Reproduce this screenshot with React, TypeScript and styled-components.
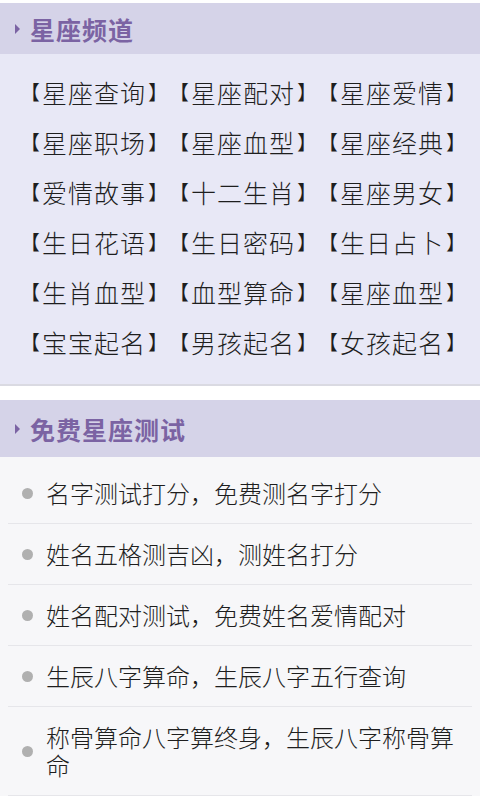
import React from 'react';
import styled, { createGlobalStyle } from 'styled-components';

const channels = [
  '星座查询', '星座配对', '星座爱情',
  '星座职场', '星座血型', '星座经典',
  '爱情故事', '十二生肖', '星座男女',
  '生日花语', '生日密码', '生日占卜',
  '生肖血型', '血型算命', '星座血型',
  '宝宝起名', '男孩起名', '女孩起名',
];

const tests = [
  '名字测试打分，免费测名字打分',
  '姓名五格测吉凶，测姓名打分',
  '姓名配对测试，免费姓名爱情配对',
  '生辰八字算命，生辰八字五行查询',
  '称骨算命八字算终身，生辰八字称骨算命',
];

const App = () => {
  return (
    <>
      <GlobalStyle />
      <Page>
        <Section>
          <Header $height={51}>
            <Arrow />
            <Title>星座频道</Title>
          </Header>
          <ChannelGrid>
            {channels.map((name, i) => (
              <ChannelLink key={i}>
                <Bracket>【</Bracket>
                <Name>{name}</Name>
                <Bracket>】</Bracket>
              </ChannelLink>
            ))}
          </ChannelGrid>
        </Section>
        <Section>
          <Header $height={57}>
            <Arrow />
            <Title>免费星座测试</Title>
          </Header>
          <TestList>
            {tests.map((text, i) => (
              <TestItem key={i}>
                <Bullet />
                <TestText>{text}</TestText>
              </TestItem>
            ))}
          </TestList>
        </Section>
      </Page>
    </>
  );
};

const GlobalStyle = createGlobalStyle`
  body {
    margin: 0;
    background: #ffffff;
    font-family: "Noto Sans CJK SC", "Noto Sans", sans-serif;
  }
`;

const Page = styled.div`
  width: 480px;
  padding-top: 3px;
  display: flex;
  flex-direction: column;
  gap: 14px;
`;

const Section = styled.div`
  display: flex;
  flex-direction: column;
`;

const Header = styled.div<{ $height: number }>`
  height: ${props => props.$height}px;
  background: #d5d3e8;
  display: flex;
  align-items: center;
  padding-left: 15px;
  gap: 10px;
`;

const Arrow = styled.div`
  width: 0;
  height: 0;
  border-top: 5px solid transparent;
  border-bottom: 5px solid transparent;
  border-left: 5px solid #7b63a3;
`;

const Title = styled.div`
  color: #7b63a3;
  font-size: 25px;
  font-weight: 700;
  letter-spacing: 1px;
`;

const ChannelGrid = styled.div`
  background: #e8e8f6;
  border-bottom: 2px solid #dadae2;
  display: grid;
  grid-template-columns: repeat(3, 149px);
  grid-auto-rows: 50px;
  align-items: center;
  padding: 13px 0 17px 20px;
`;

const ChannelLink = styled.div`
  display: flex;
  align-items: center;
  gap: 2px;
  font-weight: 300;
  color: #1e1e1e;
  white-space: nowrap;
  line-height: 28px;
`;

const Bracket = styled.span`
  font-size: 20px;
`;

const Name = styled.span`
  font-size: 25px;
  letter-spacing: 1px;
`;

const TestList = styled.div`
  background: #f7f7f9;
  padding-top: 6px;
`;

const TestItem = styled.div`
  margin: 0 8px;
  padding: 16px 15px 16px 14px;
  border-bottom: 1px solid #e6e6ea;
  display: flex;
  align-items: center;
  gap: 13px;
`;

const Bullet = styled.div`
  flex: none;
  width: 11px;
  height: 11px;
  border-radius: 50%;
  background: #b0b0b0;
`;

const TestText = styled.div`
  font-size: 24px;
  font-weight: 300;
  line-height: 28px;
  color: #1e1e1e;
`;

export default App;
